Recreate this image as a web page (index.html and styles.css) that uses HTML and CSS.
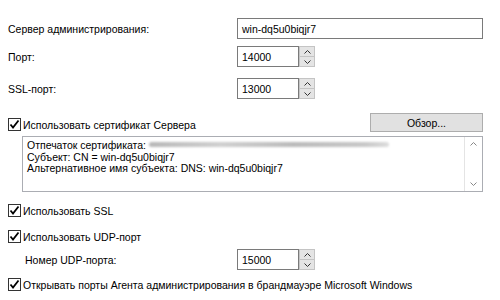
FILE: index.html
```html
<!DOCTYPE html>
<html>
<head>
<meta charset="utf-8">
<link rel="stylesheet" href="styles.css">
</head>
<body>
<div class="page">
  <div class="row r-server">
    <span class="label">Сервер администрирования:</span>
    <div class="input wide">win-dq5u0biqjr7</div>
  </div>
  <div class="row r-port">
    <span class="label">Порт:</span>
    <div class="spin"><div class="input num">14000</div><div class="btns"><span class="sb"><svg width="7" height="4" viewBox="0 0 7 4"><polyline points="0.5,3.5 3.5,0.5 6.5,3.5" fill="none" stroke="#333" stroke-width="1"/></svg></span><span class="sb"><svg width="7" height="4" viewBox="0 0 7 4"><polyline points="0.5,0.5 3.5,3.5 6.5,0.5" fill="none" stroke="#333" stroke-width="1"/></svg></span></div></div>
  </div>
  <div class="row r-ssl">
    <span class="label">SSL-порт:</span>
    <div class="spin"><div class="input num">13000</div><div class="btns"><span class="sb"><svg width="7" height="4" viewBox="0 0 7 4"><polyline points="0.5,3.5 3.5,0.5 6.5,3.5" fill="none" stroke="#333" stroke-width="1"/></svg></span><span class="sb"><svg width="7" height="4" viewBox="0 0 7 4"><polyline points="0.5,0.5 3.5,3.5 6.5,0.5" fill="none" stroke="#333" stroke-width="1"/></svg></span></div></div>
  </div>
  <div class="row r-cert">
    <label class="check"><span class="box"><svg width="11" height="11" viewBox="0 0 11 11"><polyline points="1.5,5.5 4,8.5 9.5,1.5" fill="none" stroke="#000" stroke-width="1.8"/></svg></span>Использовать сертификат Сервера</label>
    <div class="button">Обзор...</div>
  </div>
  <div class="memo">
    <div class="memo-text">
      <div>Отпечаток сертификата: <span class="blur"></span></div>
      <div>Субъект: CN = win-dq5u0biqjr7</div>
      <div>Альтернативное имя субъекта: DNS: win-dq5u0biqjr7</div>
    </div>
    <div class="scroll">
      <span class="arr"><svg width="7" height="4" viewBox="0 0 7 4"><polyline points="0.5,3.5 3.5,0.5 6.5,3.5" fill="none" stroke="#888" stroke-width="1"/></svg></span>
      <span class="arr"><svg width="7" height="4" viewBox="0 0 7 4"><polyline points="0.5,0.5 3.5,3.5 6.5,0.5" fill="none" stroke="#888" stroke-width="1"/></svg></span>
    </div>
  </div>
  <label class="check r-sslc"><span class="box"><svg width="11" height="11" viewBox="0 0 11 11"><polyline points="1.5,5.5 4,8.5 9.5,1.5" fill="none" stroke="#000" stroke-width="1.8"/></svg></span>Использовать SSL</label>
  <label class="check r-udpc"><span class="box"><svg width="11" height="11" viewBox="0 0 11 11"><polyline points="1.5,5.5 4,8.5 9.5,1.5" fill="none" stroke="#000" stroke-width="1.8"/></svg></span>Использовать UDP-порт</label>
  <div class="row r-udp">
    <span class="label ind">Номер UDP-порта:</span>
    <div class="spin"><div class="input num">15000</div><div class="btns"><span class="sb"><svg width="7" height="4" viewBox="0 0 7 4"><polyline points="0.5,3.5 3.5,0.5 6.5,3.5" fill="none" stroke="#333" stroke-width="1"/></svg></span><span class="sb"><svg width="7" height="4" viewBox="0 0 7 4"><polyline points="0.5,0.5 3.5,3.5 6.5,0.5" fill="none" stroke="#333" stroke-width="1"/></svg></span></div></div>
  </div>
  <label class="check r-fw"><span class="box"><svg width="11" height="11" viewBox="0 0 11 11"><polyline points="1.5,5.5 4,8.5 9.5,1.5" fill="none" stroke="#000" stroke-width="1.8"/></svg></span>Открывать порты Агента администрирования в брандмауэре Microsoft Windows</label>
</div>
</body>
</html>
```

FILE: styles.css
```css
html, body {
  margin: 0;
  padding: 0;
  background: #fff;
}
.page {
  width: 500px;
  height: 300px;
  box-sizing: border-box;
  padding: 18px 17px 0 8px;
  font-family: "Liberation Sans", Arial, sans-serif;
  font-size: 10.5px;
  color: #000;
  display: flex;
  flex-direction: column;
}
.row {
  display: flex;
  align-items: center;
}
.label {
  width: 229px;
  flex: none;
}
.label.ind {
  padding-left: 17px;
  width: 212px;
}
.input {
  box-sizing: border-box;
  height: 21px;
  border: 1px solid #7a7a7a;
  background: #fff;
  padding: 0 4px;
  display: flex;
  align-items: center;
}
.input.wide {
  width: 247px;
}
.spin {
  display: flex;
  align-items: stretch;
}
.input.num {
  width: 62px;
}
.btns {
  display: flex;
  flex-direction: column;
  width: 16px;
}
.sb {
  flex: 1;
  box-sizing: border-box;
  border: 1px solid #c4c4c4;
  background: #e4e4e4;
  display: flex;
  align-items: center;
  justify-content: center;
}
.sb + .sb {
  border-top: none;
}
.r-port { margin-top: 7px; }
.r-ssl { margin-top: 11px; }
.r-cert {
  margin-top: 14px;
  justify-content: space-between;
}
.r-cert .check { margin-top: 4px; }
.check {
  display: flex;
  align-items: center;
  height: 13px;
}
.box {
  box-sizing: border-box;
  width: 13px;
  height: 13px;
  border: 1px solid #333;
  background: #fff;
  margin-right: 2px;
  display: flex;
  align-items: center;
  justify-content: center;
  flex: none;
}
.button {
  box-sizing: border-box;
  width: 113px;
  height: 19px;
  background: #e1e1e1;
  border: 1px solid #adadad;
  display: flex;
  align-items: center;
  justify-content: center;
}
.memo {
  margin: 4px 0 0 14px;
  height: 56px;
  box-sizing: border-box;
  border: 1px solid #abadb3;
  display: flex;
}
.memo-text {
  flex: 1;
  padding: 3px 0 0 4px;
  line-height: 11.5px;
  white-space: nowrap;
  overflow: hidden;
}
.blur {
  display: inline-block;
  width: 240px;
  height: 5px;
  vertical-align: 2px;
  background: linear-gradient(90deg, #b8b8b8, #d0d0d0 30%, #bbb 60%, #c8c8c8 90%, #ddd);
  filter: blur(1.2px);
  border-radius: 3px;
}
.scroll {
  width: 17px;
  border-left: 1px solid #e4e4e4;
  background: #fff;
  display: flex;
  flex-direction: column;
  justify-content: space-between;
  align-items: center;
  padding: 5px 0;
}
.arr { display: flex; }
.r-sslc { margin-top: 12px; }
.r-udpc { margin-top: 13px; }
.r-udp { margin-top: 6px; }
.r-fw { margin-top: 8px; }
```
